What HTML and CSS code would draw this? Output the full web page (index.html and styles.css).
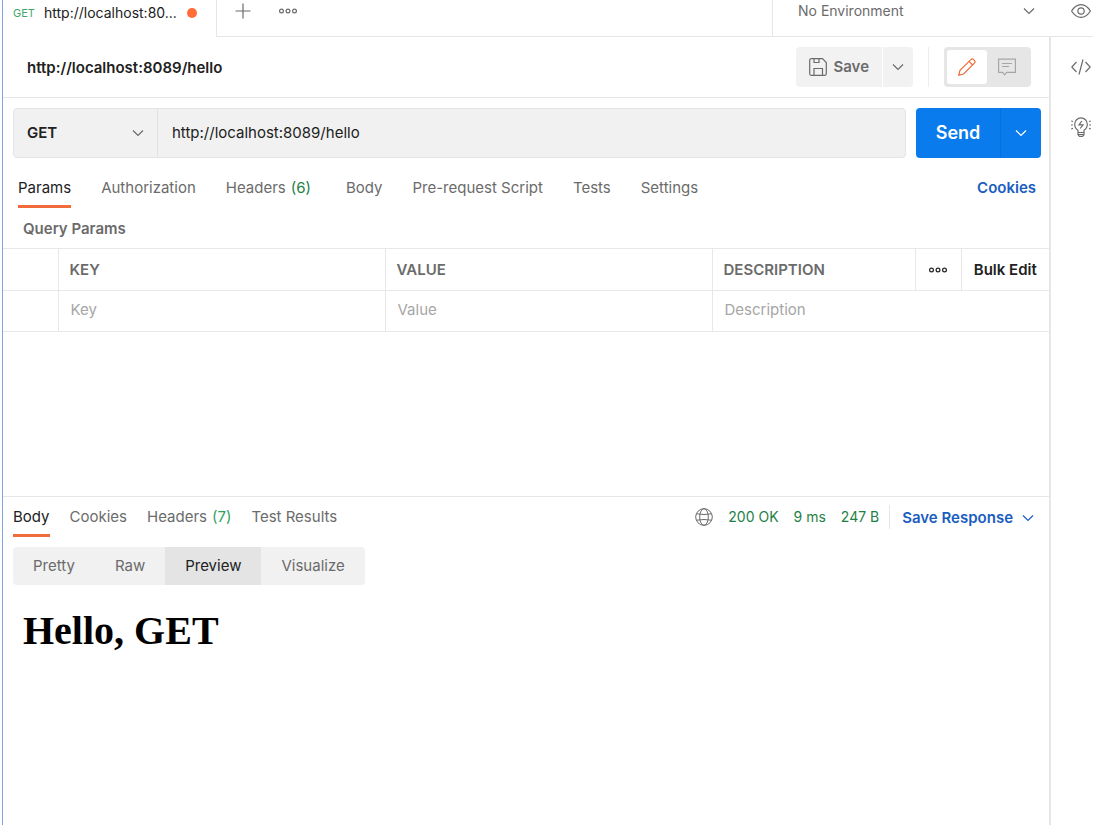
FILE: index.html
```html
<!DOCTYPE html>
<html lang="en">
<head>
<meta charset="utf-8">
<meta name="viewport" content="width=device-width, initial-scale=1">
<title>http://localhost:8089/hello</title>
<link rel="stylesheet" href="styles.css">
</head>
<body>
<svg class="defs" aria-hidden="true">
  <symbol id="chevron" viewBox="0 0 12 12"><path d="M1 3.5l5 5 5-5"/></symbol>
  <symbol id="dots" viewBox="0 0 18 6"><circle cx="2.5" cy="3" r="1.9"/><circle cx="9" cy="3" r="1.9"/><circle cx="15.5" cy="3" r="1.9"/></symbol>
</svg>
<div class="app">
  <header class="topbar">
    <div class="file-tab">
      <span class="file-method">GET</span>
      <span class="file-name">http://localhost:80...</span>
      <span class="unsaved"></span>
    </div>
    <div class="tab-actions">
      <button class="plain" aria-label="New tab"><svg class="icon" width="16" height="16" viewBox="0 0 16 16"><path d="M8 .5v15M.5 8h15"/></svg></button>
      <button class="plain" aria-label="Tab options"><svg class="icon" width="18" height="6"><use href="#dots"/></svg></button>
    </div>
    <div class="environment">
      <select class="env-select" aria-label="Environment"><option>No Environment</option></select>
      <svg class="icon select-arrow" width="12" height="12"><use href="#chevron"/></svg>
    </div>
    <div class="quick-look">
      <button class="plain" aria-label="Environment quick look"><svg class="icon" width="20" height="14" viewBox="0 0 20 14"><path d="M.6 7C3 3 6.200.6 10 .6S17 3 19.400 7C17 11 13.800 13.400 10 13.400S3 11 .6 7z"/><circle cx="10" cy="7" r="3.200"/></svg></button>
    </div>
  </header>

  <div class="body">
    <main class="main">
      <section class="request">
        <div class="title-bar">
          <h1 class="title">http://localhost:8089/hello</h1>
          <div class="save-group">
            <button class="save"><svg class="icon" width="18" height="18" viewBox="0 0 18 18"><path d="M.7 2.200A1.500 1.500 0 0 1 2.200.7h11.300l3.800 3.800v11.300a1.500 1.500 0 0 1-1.500 1.500H2.200a1.500 1.500 0 0 1-1.500-1.500zM5 .7v3.800h5V.7M5 17v-6.500h8.500V17"/></svg>Save</button>
            <button class="save-more" aria-label="Save options"><svg class="icon" width="12" height="12"><use href="#chevron"/></svg></button>
          </div>
          <div class="mode-toggle">
            <button class="mode mode-on" aria-label="Edit"><svg class="icon" width="18" height="18" viewBox="0 0 18 18"><path d="M.8 17.200l1.200-4.800L12.800 1.600a2 2 0 0 1 2.800 0l.8.8a2 2 0 0 1 0 2.800L5.600 16zM11 3.400L14.600 7"/></svg></button>
            <button class="mode" aria-label="Comments"><svg class="icon" width="18" height="18" viewBox="0 0 18 18"><path d="M.6 1.100h16.800v13.200H8.600L6.600 16.800 4.600 14.300H.6zM4 5.500h10M4 8.500h7"/></svg></button>
          </div>
        </div>

        <div class="url-row">
          <div class="url-box">
            <div class="method">
              <select class="method-select" aria-label="Method"><option>GET</option></select>
              <svg class="icon select-arrow" width="12" height="12"><use href="#chevron"/></svg>
            </div>
            <input class="url" type="text" value="http://localhost:8089/hello" aria-label="Request URL">
          </div>
          <div class="send-group">
            <button class="send">Send</button>
            <button class="send-more" aria-label="Send options"><svg class="icon" width="12" height="12"><use href="#chevron"/></svg></button>
          </div>
        </div>

        <nav class="tabs request-tabs">
          <button class="tab tab-on">Params</button>
          <button class="tab">Authorization</button>
          <button class="tab tab-headers">Headers <span class="count">(6)</span></button>
          <button class="tab">Body</button>
          <button class="tab">Pre-request Script</button>
          <button class="tab">Tests</button>
          <button class="tab">Settings</button>
          <a class="link push" href="#cookies">Cookies</a>
        </nav>

        <h2 class="section-title">Query Params</h2>
        <table class="params">
          <colgroup><col class="col-check"><col class="col-wide"><col class="col-wide"><col><col class="col-dots"><col class="col-bulk"></colgroup>
          <thead>
            <tr><th></th><th>KEY</th><th>VALUE</th><th>DESCRIPTION</th>
              <th class="center"><button class="plain dark" aria-label="Column options"><svg class="icon" width="18" height="6"><use href="#dots"/></svg></button></th>
              <th class="center"><button class="plain bulk">Bulk Edit</button></th></tr>
          </thead>
          <tbody>
            <tr><td></td>
              <td><input class="cell" placeholder="Key" aria-label="Key"></td>
              <td><input class="cell" placeholder="Value" aria-label="Value"></td>
              <td colspan="3"><input class="cell" placeholder="Description" aria-label="Description"></td></tr>
          </tbody>
        </table>
      </section>

      <section class="response">
        <div class="response-bar">
          <nav class="tabs response-tabs">
            <button class="tab tab-on">Body</button>
            <button class="tab">Cookies</button>
            <button class="tab">Headers <span class="count count-light">(7)</span></button>
            <button class="tab">Test Results</button>
          </nav>
          <div class="status">
            <svg class="icon" width="18" height="18" viewBox="0 0 18 18"><circle cx="9" cy="9" r="8.300"/><ellipse cx="9" cy="9" rx="4.300" ry="8.300"/><path d="M1.500 5.800Q9 7.200 16.500 5.800M1.500 12.200Q9 10.800 16.500 12.200"/></svg>
            <span>200 OK</span><span>9 ms</span><span>247 B</span>
          </div>
          <button class="save-response">Save Response<svg class="icon" width="12" height="12"><use href="#chevron"/></svg></button>
        </div>
        <div class="views">
          <button class="view">Pretty</button><button class="view">Raw</button><button class="view view-on">Preview</button><button class="view">Visualize</button>
        </div>
        <div class="preview"><h1 class="preview-title">Hello, GET</h1></div>
      </section>
    </main>

    <aside class="rail">
      <button class="plain" aria-label="Code"><svg class="icon" width="20" height="16" viewBox="0 0 20 16"><path d="M5.500 3L.8 8l4.700 5M14.500 3l4.700 5-4.700 5M12 .5L8 15.500"/></svg></button>
      <button class="plain" aria-label="Tips"><svg class="icon" width="20" height="20" viewBox="0 0 20 20"><path d="M7 15.500v-2.300C5 12 3.700 9.800 3.700 7.200a6.300 6.300 0 0 1 12.600 0c0 2.600-1.300 4.800-3.300 6v2.300zM7 15.500v2.300l1.500 1.500h3l1.500-1.500v-2.300M7 17.500h6M10.800 4L8 7.800h4L9.200 11.500M.2 4l1.800.5M0 8h1.800M.2 12l1.800-.6M19.800 4l-1.800.5M20 8h-1.800M19.800 12l-1.800-.6"/></svg></button>
    </aside>
  </div>
</div>
</body>
</html>
```

FILE: styles.css
```css
* { box-sizing: border-box; }

body {
  margin: 0;
  background: #fff;
  color: #6b6b6b;
  font: 15px/20px Inter, "Liberation Sans", sans-serif;
}

button, input, select { font: inherit; color: inherit; }
button { border: 0; padding: 0; background: none; cursor: pointer; }
select { appearance: none; border: 0; background: transparent; width: 100%; }

.defs { position: absolute; width: 0; height: 0; }
.icon { display: block; flex: none; fill: none; stroke: currentColor; stroke-width: 1.2; }
.plain { display: flex; align-items: center; }

.app {
  display: flex;
  flex-direction: column;
  min-height: 100vh;
  margin-left: 2px;
  border-left: 1px solid #7da7e0;
}

/* Top bar */
.topbar { display: flex; height: 37px; }
.file-tab {
  display: flex;
  align-items: center;
  width: 214px;
  padding: 0 10px 11px;
  border-right: 1px solid #e6e6e6;
}
.file-method { width: 31px; font-size: 11px; color: #3fa866; }
.file-name { flex: 1; font-size: 14px; color: #212121; }
.unsaved { width: 10px; height: 10px; margin-right: 9px; border-radius: 50%; background: #ff6c37; }
.tab-actions {
  display: flex;
  flex: 1;
  align-items: center;
  gap: 28px;
  padding: 0 18px 14px;
  border-bottom: 1px solid #e6e6e6;
}
.environment {
  display: flex;
  align-items: center;
  width: 278px;
  padding: 0 15px 14px 25px;
  border-left: 1px solid #e6e6e6;
  border-bottom: 1px solid #e6e6e6;
}
.env-select { padding: 0; font-size: 14px; }
.select-arrow { pointer-events: none; }
.quick-look {
  display: flex;
  align-items: center;
  width: 43px;
  padding: 0 0 15px 21px;
  border-bottom: 1px solid #e6e6e6;
}

/* Layout */
.body { display: flex; flex: 1; }
.main { display: flex; flex: 1; flex-direction: column; min-width: 0; }
.rail {
  display: flex;
  flex-direction: column;
  gap: 42px;
  width: 44px;
  padding: 22px 0 0 20px;
  border-left: 2px solid #e6e6e6;
}

/* Request title */
.request { flex: 7 0 0; }
.title-bar {
  display: flex;
  align-items: center;
  height: 61px;
  padding: 0 18px 0 24px;
  border-bottom: 1px solid #e6e6e6;
}
.title { flex: 1; margin: 0; padding-top: 2px; font-size: 15px; font-weight: 600; color: #212121; }
.save-group {
  display: flex;
  gap: 1px;
  height: 40px;
  padding-right: 15px;
  border-right: 1px solid #ededed;
  font-weight: 600;
}
.save {
  display: flex;
  align-items: center;
  gap: 6px;
  padding: 0 13px;
  border-radius: 4px 0 0 4px;
  background: #f2f2f2;
}
.save-more {
  display: grid;
  place-items: center;
  width: 30px;
  border-radius: 0 4px 4px 0;
  background: #f2f2f2;
}
.mode-toggle {
  display: flex;
  height: 40px;
  margin-left: 15px;
  padding: 3px 4px 3px 3px;
  border-radius: 4px;
  background: #e6e6e6;
  color: #a6a6a6;
}
.mode { display: grid; place-items: center; width: 40px; border-radius: 3px; }
.mode-on { background: #fff; color: #f26b3a; }

/* URL row */
.url-row { display: flex; gap: 10px; padding: 10px 8px 0 10px; }
.url-box {
  display: flex;
  flex: 1;
  height: 50px;
  border: 1px solid #e4e4e4;
  border-radius: 4px;
  background: #f1f1f1;
}
.method {
  display: flex;
  align-items: center;
  width: 144px;
  padding: 0 13px;
  border-right: 1px solid #e1e1e1;
}
.method-select { padding: 0; font-weight: 600; color: #212121; }
.url { flex: 1; min-width: 0; padding: 0 14px; border: 0; background: none; color: #212121; }
.send-group { display: flex; height: 50px; border-radius: 4px; overflow: hidden; color: #fff; }
.send { width: 84px; background: #097bed; font-size: 18px; font-weight: 600; }
.send-more {
  display: grid;
  place-items: center;
  width: 41px;
  border-left: 1px solid #0870d9;
  background: #097bed;
}

/* Tabs */
.tabs { display: flex; }
.tab { display: flex; gap: 5px; border-bottom: 3px solid transparent; white-space: nowrap; }
.tab-on { border-color: #f26b3a; color: #212121; }
.count { color: #1f7f46; }
.count-light { color: #2fa35c; }
.request-tabs { gap: 30px; padding: 0 13px 0 15px; }
.request-tabs .tab { padding: 20px 0 7px; }
.tab-headers { margin-right: 5px; }
.link { padding-top: 20px; color: #1a5dbf; font-weight: 600; text-decoration: none; }
.push { margin-left: auto; }
.section-title { margin: 0; padding: 11px 20px 9px; font-size: 15px; font-weight: 600; }

/* Parameters */
.params { width: 100%; border-collapse: collapse; table-layout: fixed; }
.col-check { width: 55px; }
.col-wide { width: 327px; }
.col-dots { width: 46px; }
.col-bulk { width: 88px; }
.params tr { height: 41px; }
.params th, .params td {
  padding: 0 0 0 11px;
  border: 1px solid #e8e8e8;
  border-width: 1px 0 1px 1px;
  text-align: left;
}
.params th { font-weight: 600; }
.params th:first-child, .params td:first-child { border-left: 0; }
.params thead tr { height: 42px; }
.params .center { padding: 0; }
.center .plain { margin: 0 auto; }
.dark, .bulk { color: #212121; }
.cell { display: block; width: 100%; padding: 0 0 2px 1px; border: 0; outline: 0; }
.cell::placeholder { color: #a6a6a6; }

/* Response */
.response { flex: 5 0 0; border-top: 1px solid #e6e6e6; }
.response-bar { display: flex; align-items: flex-start; padding: 0 15px 0 10px; }
.response-tabs { flex: 1; gap: 20px; }
.response-tabs .tab { padding: 10px 0 7px; }
.status {
  display: flex;
  align-items: center;
  gap: 15px;
  height: 24px;
  margin-top: 8px;
  padding-right: 10px;
  border-right: 1px solid #e6e6e6;
  font-size: 14px;
  color: #1f7f46;
}
.status .icon { color: #6b6b6b; stroke-width: 1; }
.save-response {
  display: flex;
  align-items: center;
  gap: 9px;
  margin-top: 11px;
  padding-left: 12px;
  color: #1a5dbf;
  font-weight: 600;
}
.views {
  display: inline-flex;
  height: 38px;
  margin: 10px 10px 0;
  border-radius: 4px;
  background: #f1f1f1;
  overflow: hidden;
}
.view { padding: 0 20px; }
.view-on { background: #e4e4e4; color: #212121; }
.preview { padding: 22px 20px; }
.preview-title {
  margin: 0;
  color: #000;
  font: bold 40px/48px "Liberation Serif", "Times New Roman", serif;
}
```
